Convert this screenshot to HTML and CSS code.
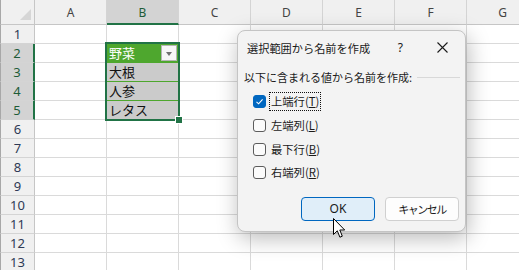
FILE: index.html
```html
<!DOCTYPE html>
<html lang="ja">
<head>
    <meta charset="UTF-8">
    <title>選択範囲から名前を作成</title>
    <link rel="stylesheet" href="styles.css">
</head>
<body>

    <div class="sheet">
        <div class="corner"><span class="tri"></span></div>
        <div class="colhd">A</div>
        <div class="colhd sel">B</div>
        <div class="colhd">C</div>
        <div class="colhd">D</div>
        <div class="colhd">E</div>
        <div class="colhd">F</div>
        <div class="colhd">G</div>

        <div class="rowhd">1</div><div class="c"></div><div class="c"></div><div class="c"></div><div class="c"></div><div class="c"></div><div class="c"></div><div class="c"></div>

        <div class="rowhd sel">2</div><div class="c"></div>
        <div class="c head">野菜<span class="drop"></span></div>
        <div class="c"></div><div class="c"></div><div class="c"></div><div class="c"></div><div class="c"></div>

        <div class="rowhd sel">3</div><div class="c"></div><div class="c item">大根</div><div class="c"></div><div class="c"></div><div class="c"></div><div class="c"></div><div class="c"></div>
        <div class="rowhd sel">4</div><div class="c"></div><div class="c item">人参</div><div class="c"></div><div class="c"></div><div class="c"></div><div class="c"></div><div class="c"></div>
        <div class="rowhd sel">5</div><div class="c"></div><div class="c item">レタス</div><div class="c"></div><div class="c"></div><div class="c"></div><div class="c"></div><div class="c"></div>

        <div class="rowhd">6</div><div class="c"></div><div class="c"></div><div class="c"></div><div class="c"></div><div class="c"></div><div class="c"></div><div class="c"></div>
        <div class="rowhd">7</div><div class="c"></div><div class="c"></div><div class="c"></div><div class="c"></div><div class="c"></div><div class="c"></div><div class="c"></div>
        <div class="rowhd">8</div><div class="c"></div><div class="c"></div><div class="c"></div><div class="c"></div><div class="c"></div><div class="c"></div><div class="c"></div>
        <div class="rowhd">9</div><div class="c"></div><div class="c"></div><div class="c"></div><div class="c"></div><div class="c"></div><div class="c"></div><div class="c"></div>
        <div class="rowhd">10</div><div class="c"></div><div class="c"></div><div class="c"></div><div class="c"></div><div class="c"></div><div class="c"></div><div class="c"></div>
        <div class="rowhd">11</div><div class="c"></div><div class="c"></div><div class="c"></div><div class="c"></div><div class="c"></div><div class="c"></div><div class="c"></div>
        <div class="rowhd">12</div><div class="c"></div><div class="c"></div><div class="c"></div><div class="c"></div><div class="c"></div><div class="c"></div><div class="c"></div>
        <div class="rowhd">13</div><div class="c"></div><div class="c"></div><div class="c"></div><div class="c"></div><div class="c"></div><div class="c"></div><div class="c"></div>

        <!-- selected range B2:B5 -->
        <div class="selection"><span class="handle"></span></div>
    </div>

    <div class="dialog">
        <div class="dlg-title">
            <span class="title-text">選択範囲から名前を作成</span>
            <span class="help">?</span>
            <svg class="close" width="11" height="11" viewBox="0 0 11 11">
                <path d="M0.5 0.5 L10.5 10.5 M10.5 0.5 L0.5 10.5" stroke="#1a1a1a" stroke-width="1.1" fill="none"/>
            </svg>
        </div>

        <div class="group-label">
            <span>以下に含まれる値から名前を作成:</span>
            <span class="rule"></span>
        </div>

        <div class="options">
            <div class="opt">
                <span class="box checked">
                    <svg width="9" height="9" viewBox="0 0 9 9"><path d="M1.5 4.8 L3.6 6.8 L7.6 2.4" stroke="#fff" stroke-width="1.1" fill="none"/></svg>
                </span>
                <span class="lbl focus">上端行(<u>T</u>)</span>
            </div>
            <div class="opt">
                <span class="box"></span>
                <span class="lbl">左端列(<u>L</u>)</span>
            </div>
            <div class="opt">
                <span class="box"></span>
                <span class="lbl">最下行(<u>B</u>)</span>
            </div>
            <div class="opt">
                <span class="box"></span>
                <span class="lbl">右端列(<u>R</u>)</span>
            </div>
        </div>

        <div class="buttons">
            <button class="btn primary">OK</button>
            <button class="btn">キャンセル</button>
        </div>
    </div>

    <svg class="cursor" width="13" height="21" viewBox="0 0 13 21">
        <path d="M0.5 0.5 L0.5 16.5 L4.3 12.8 L6.9 19.2 L9.3 18.2 L6.8 12 L11.7 12 Z" fill="#fff" stroke="#000" stroke-width="1" stroke-linejoin="round"/>
    </svg>

</body>
</html>
```

FILE: styles.css
```css
/* spreadsheet behind the dialog */
body {
    margin: 0;
    width: 519px;
    height: 270px;
    overflow: hidden;
    background: #ffffff;
    font-family: "Noto Sans CJK JP", "Noto Sans", sans-serif;
    position: relative;
}

.sheet {
    position: relative;
    display: grid;
    grid-template-columns: 35px repeat(7, 72px);
    grid-template-rows: 25px;
    grid-auto-rows: 19px;
    width: 539px;
}

.corner {
    background: #f0f0f0;
    border-right: 1px solid #c6c6c6;
    border-bottom: 1px solid #c6c6c6;
    border-left: 1px solid #a8a8a8;
    box-sizing: border-box;
    position: relative;
}

.corner .tri {
    position: absolute;
    right: 3px;
    bottom: 4px;
    width: 0;
    height: 0;
    border-left: 11px solid transparent;
    border-bottom: 11px solid #d6d6d6;
}

.colhd {
    background: #f0f0f0;
    border-right: 1px solid #d4d4d4;
    border-bottom: 1px solid #c6c6c6;
    box-sizing: border-box;
    display: flex;
    align-items: center;
    justify-content: center;
    font-family: "Noto Sans", sans-serif;
    font-size: 12px;
    color: #444;
    padding-top: 1px;
}

.colhd.sel {
    background: #d3d3d3;
    border-bottom: 2px solid #217346;
    color: #1e5c38;
}

.rowhd {
    background: #f0f0f0;
    border-right: 1px solid #c6c6c6;
    border-bottom: 1px solid #d4d4d4;
    border-left: 1px solid #a8a8a8;
    box-sizing: border-box;
    display: flex;
    align-items: center;
    justify-content: center;
    font-family: "Noto Sans", sans-serif;
    font-size: 13px;
    color: #2e3a55;
}

.rowhd.sel {
    background: #d3d3d3;
    border-right: 2px solid #217346;
    color: #1e5c38;
}

.c {
    border-right: 1px solid #dadada;
    border-bottom: 1px solid #dadada;
    box-sizing: border-box;
}

.c.head {
    background: #4ea72e;
    color: #fff;
    font-size: 13px;
    line-height: 18px;
    padding-left: 2px;
    position: relative;
    border-bottom: 1px solid #4ea72e;
}

.c.head .drop {
    position: absolute;
    right: 1px;
    top: 1px;
    width: 16px;
    height: 16px;
    background: #f7f7f7;
    border: 1px solid #b4b4b4;
    box-sizing: border-box;
}

.c.head .drop::after {
    content: "";
    position: absolute;
    left: 4px;
    top: 6px;
    border-left: 3.5px solid transparent;
    border-right: 3.5px solid transparent;
    border-top: 4px solid #707070;
}

.c.item {
    background: #cbcbcb;
    border-bottom: 1px solid #4ea72e;
    color: #111;
    font-size: 13px;
    line-height: 18px;
    padding-left: 2px;
}

.selection {
    position: absolute;
    left: 105px;
    top: 42px;
    width: 75px;
    height: 79px;
    border: 2px solid #217346;
    box-sizing: border-box;
}

.selection .handle {
    position: absolute;
    right: -5px;
    bottom: -5px;
    width: 6px;
    height: 6px;
    background: #217346;
    border: 1px solid #fff;
}

/* dialog */
.dialog {
    position: absolute;
    left: 237px;
    top: 30px;
    width: 229px;
    height: 202px;
    box-sizing: border-box;
    background: #f3f3f3;
    border: 1px solid #c4c4c4;
    border-radius: 8px;
    box-shadow: 2px 6px 22px rgba(0, 0, 0, 0.28);
    display: flex;
    flex-direction: column;
    font-size: 11px;
    color: #1a1a1a;
}

.dlg-title {
    display: flex;
    align-items: center;
    height: 31px;
    padding: 2px 17px 0 9px;
    box-sizing: border-box;
    font-size: 11.2px;
}

.title-text {
    flex: 1;
}

.help {
    font-family: "Noto Sans", sans-serif;
    font-size: 12px;
    margin-right: 34px;
}

.group-label {
    display: flex;
    align-items: center;
    padding: 6px 5px 0 6px;
    height: 18px;
}

.group-label .rule {
    flex: 1;
    height: 1px;
    background: #d8d8d8;
    margin-left: 5px;
    margin-top: 1px;
}

.options {
    display: flex;
    flex-direction: column;
    padding: 4px 0 0 15px;
}

.opt {
    display: flex;
    align-items: center;
    height: 23.7px;
}

.box {
    width: 13px;
    height: 13px;
    box-sizing: border-box;
    border: 1px solid #5c5c5c;
    border-radius: 3px;
    background: #fbfbfb;
    display: flex;
    align-items: center;
    justify-content: center;
}

.box.checked {
    background: #0067c0;
    border-color: #0067c0;
}

.lbl {
    margin-left: 3px;
    padding: 1px 1px;
    border: 1px solid transparent;
    font-size: 11.3px;
    line-height: 15px;
}

.lbl.focus {
    border: 1px dotted #111;
}

.lbl u {
    text-decoration-thickness: 1px;
    text-underline-offset: 1px;
}

.buttons {
    display: flex;
    justify-content: flex-end;
    gap: 10px;
    padding: 0 6px 0 0;
    margin-top: 12px;
}

.btn {
    width: 74px;
    height: 24px;
    box-sizing: border-box;
    border: 1px solid #d0d0d0;
    border-radius: 4px;
    background: #fdfdfd;
    font-family: "Noto Sans CJK JP", "Noto Sans", sans-serif;
    font-size: 11px;
    letter-spacing: -1.5px;
    color: #1a1a1a;
    padding: 0;
}

.btn.primary {
    background: #e0eef9;
    border-color: #0067c0;
    font-family: "Noto Sans", sans-serif;
    font-size: 12px;
    letter-spacing: 0;
}

.cursor {
    position: absolute;
    left: 333px;
    top: 218px;
}
```
